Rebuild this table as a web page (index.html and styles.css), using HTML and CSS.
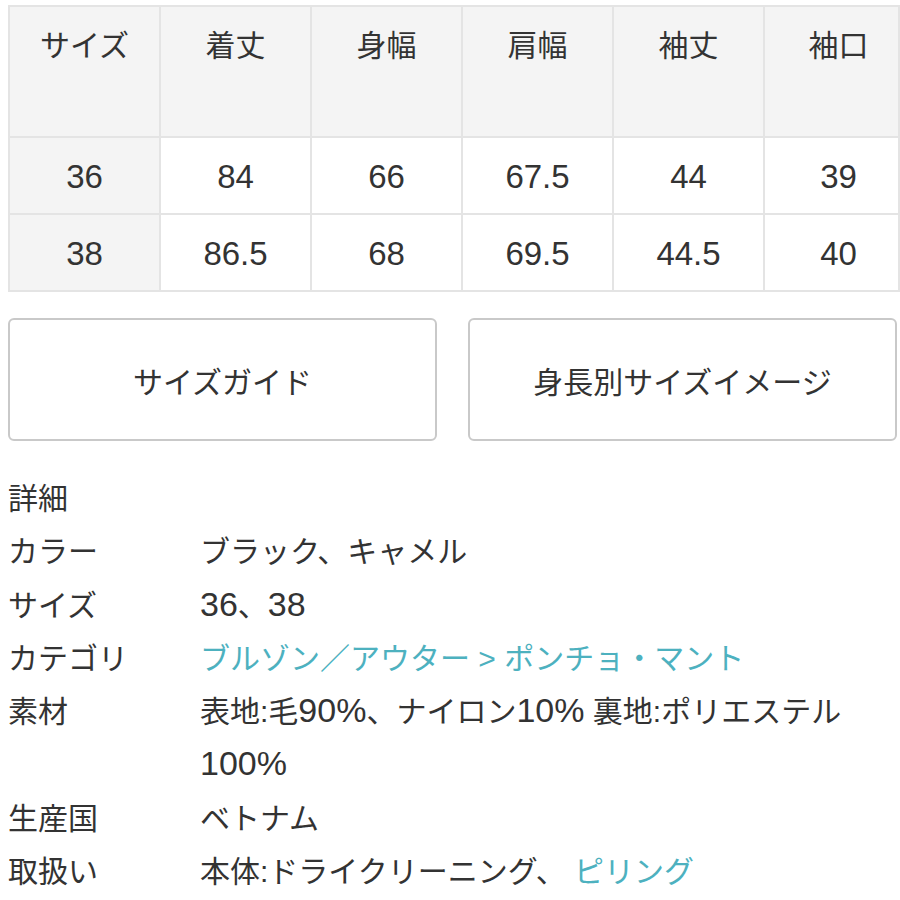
FILE: index.html
```html
<!DOCTYPE html>
<html lang="ja">
<head>
<meta charset="utf-8">
<link rel="stylesheet" href="styles.css">
</head>
<body>
<div class="page">
  <table class="size-table">
    <colgroup>
      <col class="c"><col class="c"><col class="c"><col class="c"><col class="c"><col class="c-last">
    </colgroup>
    <thead>
      <tr>
        <th>サイズ</th><th>着丈</th><th>身幅</th><th>肩幅</th><th>袖丈</th><th class="last">袖口</th>
      </tr>
    </thead>
    <tbody>
      <tr>
        <td class="head">36</td><td>84</td><td>66</td><td>67.5</td><td>44</td><td class="last">39</td>
      </tr>
      <tr>
        <td class="head">38</td><td>86.5</td><td>68</td><td>69.5</td><td>44.5</td><td class="last">40</td>
      </tr>
    </tbody>
  </table>

  <div class="buttons">
    <a class="btn">サイズガイド</a>
    <a class="btn">身長別サイズイメージ</a>
  </div>

  <div class="details">
    <div class="title">詳細</div>
    <dl class="spec">
      <dt>カラー</dt><dd>ブラック、キャメル</dd>
      <dt>サイズ</dt><dd><span class="n">36</span>、<span class="n">38</span></dd>
      <dt>カテゴリ</dt><dd><a class="link">ブルゾン／アウター</a> <span class="link">&gt;</span> <a class="link">ポンチョ・マント</a></dd>
      <dt>素材</dt><dd>表地:毛<span class="n">90%</span>、ナイロン<span class="n">10%</span> 裏地:ポリエステル <span class="n">100%</span></dd>
      <dt>生産国</dt><dd>ベトナム</dd>
      <dt>取扱い</dt><dd>本体:ドライクリーニング、 <a class="link">ピリング</a></dd>
    </dl>
  </div>
</div>
</body>
</html>
```

FILE: styles.css
```css
html, body {
  margin: 0;
  padding: 0;
  background: #fff;
}
body {
  font-family: "Liberation Sans", "Noto Sans CJK JP", sans-serif;
  color: #333;
  overflow: hidden;
}
.page {
  padding: 5px 2px 0 8px;
}
.size-table {
  width: 890px;
  table-layout: fixed;
  border-collapse: collapse;
}
.size-table col.c { width: 151px; }
.size-table col.c-last { width: 135px; }
.size-table th,
.size-table td {
  border: 2px solid #e4e4e4;
  text-align: center;
  padding: 0;
  font-weight: normal;
}
.size-table th {
  background: #f4f4f4;
  height: 131px;
  vertical-align: top;
  font-size: 30px;
  line-height: 45px;
  padding-top: 16px;
  box-sizing: border-box;
}
.size-table td {
  height: 77px;
  font-size: 33px;
  vertical-align: middle;
  padding-top: 3px;
  box-sizing: border-box;
}
.size-table td.head { background: #f4f4f4; }
.size-table .last { padding-left: 14px; }

.buttons {
  display: grid;
  grid-template-columns: 429px 429px;
  column-gap: 31px;
  margin-top: 26px;
}
.btn {
  display: flex;
  align-items: center;
  justify-content: center;
  height: 123px;
  box-sizing: border-box;
  border: 2px solid #c9c9c9;
  border-radius: 6px;
  font-size: 30px;
  color: #333;
}

.details {
  margin-top: 31px;
  font-size: 30px;
  line-height: 53.3px;
}
.spec {
  display: grid;
  grid-template-columns: 192px 690px;
  margin: 0;
}
.spec dt, .spec dd {
  margin: 0;
}
.n {
  font-size: 34px;
  line-height: 1;
}
.link {
  color: #4db1bf;
  text-decoration: none;
}
```
